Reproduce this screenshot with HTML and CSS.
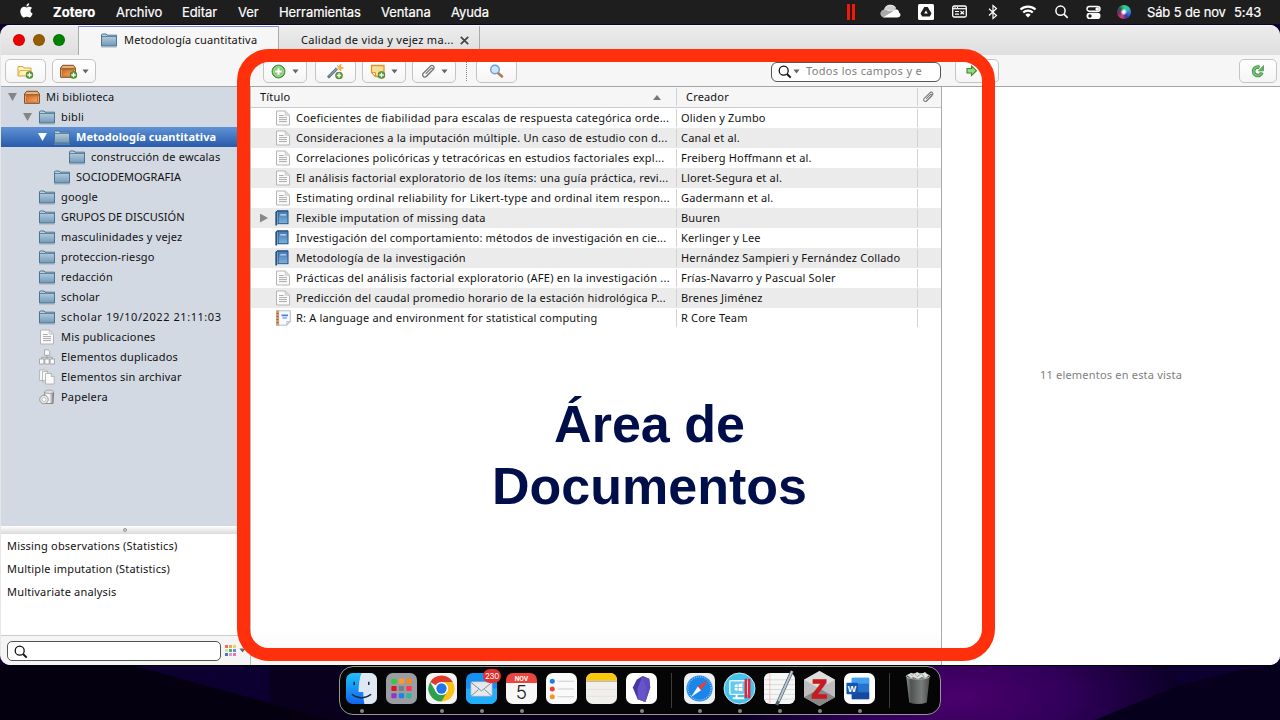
FILE: index.html
```html
<!DOCTYPE html>
<html lang="es">
<head>
<meta charset="utf-8">
<title>Zotero</title>
<link rel="stylesheet" href="styles.css">
</head>
<body>
<svg class="defs" width="0" height="0">
  <defs>
    <linearGradient id="gFolder" x1="0" y1="0" x2="0" y2="1"><stop offset="0" stop-color="#c3d6e4"/><stop offset="1" stop-color="#7199b8"/></linearGradient>
    <linearGradient id="gBox" x1="0" y1="0" x2="1" y2="1"><stop offset="0" stop-color="#cf6f25"/><stop offset="1" stop-color="#f5a566"/></linearGradient>
    <linearGradient id="gBook" x1="0" y1="0" x2="0" y2="1"><stop offset="0" stop-color="#4579b5"/><stop offset="1" stop-color="#7ab0dc"/></linearGradient>
    <linearGradient id="gCan" x1="0" y1="0" x2="1" y2="0"><stop offset="0" stop-color="#eee"/><stop offset=".5" stop-color="#fff"/><stop offset="1" stop-color="#777"/></linearGradient>
    <symbol id="folder" viewBox="0 0 16 16"><path d="M.5 14V2.700L1.200 2h4l.8 1.200h9.500V14z" fill="url(#gFolder)" stroke="#4b7492"/><path d="M1 4.500h14" stroke="#4b7492" stroke-width=".8"/><path d="M0 15.100h16" stroke="#9aa5b2" stroke-width=".7"/></symbol>
    <symbol id="box" viewBox="0 0 16 16"><path d="M.6 5 2.600 2.300h10.800L15.400 5v9.300H.6z" fill="#e9b27c" stroke="#824717"/><path d="M1.200 5.200h13.600v1.300H1.200z" fill="#8d4d1b"/><path d="M2.500 6.800h11v6.400h-11z" fill="url(#gBox)" stroke="#b4581b" stroke-width=".6"/></symbol>
    <symbol id="page" viewBox="0 0 16 16"><path d="M1.500 1h8.700l4.300 4.200V15h-13z" fill="#fbfbfb" stroke="#b5b5b5"/><path d="M10.200 1v4.200h4.300z" fill="#e2e2e2" stroke="#bbb" stroke-width=".7"/><path d="M4 5.500h4.700M4 7.600h8M4 9.600h8M4 11.600h8" stroke="#a2a2a2" stroke-width=".9"/></symbol>
    <symbol id="book" viewBox="0 0 16 16"><path d="M2 .8h11v13.400H2.800L.9 15.300V2z" fill="#2b5687" stroke="#244b78"/><path d="M3.700 1.500h8.800v11.800H3.700z" fill="url(#gBook)"/><path d="M2.600 1.800v12.400" stroke="#b2cae0" stroke-width=".7"/><path d="M5.200 4.200h6v1.200h-6z" fill="#c8e0f2"/><path d="M2.200 14.700h11" stroke="#dfe8ef" stroke-width="1"/></symbol>
    <symbol id="plus" viewBox="0 0 10 10"><circle cx="5" cy="5" r="4.400" fill="#5a9e3b" stroke="#3f7b28" stroke-width=".8"/><path d="M5 2.300v5.400M2.300 5h5.400" stroke="#fff" stroke-width="1.600"/></symbol>
    <symbol id="clip" viewBox="0 0 16 16"><path d="M6 13.200 13.700 5.500c1.100-1.200 1-2.600.1-3.400-.9-.8-2.300-.7-3.300.3L3 9.800c-1 1-1 2.600 0 3.500s2.500.8 3.500-.2l6.300-6.400c.7-.7.7-1.500.2-2s-1.300-.4-1.900.2L6 10" fill="none" stroke="#777" stroke-width="1.400" stroke-linecap="round"/></symbol>
    <symbol id="loupe" viewBox="0 0 14 14"><circle cx="5.700" cy="5.700" r="4.500" fill="none" stroke="#111" stroke-width="1.300"/><path d="m9 9 3.700 3.700" stroke="#111" stroke-width="1.900"/></symbol>
    <symbol id="down" viewBox="0 0 8 5"><path d="M.5.3h7L4 4.800z" fill="#666"/></symbol>
  </defs>
</svg>

<header class="menubar">
  <svg class="apple" viewBox="0 0 14 17"><path d="M9.900.2c.2 1.700-1.300 3.500-3 3.400C6.700 2 8.200.4 9.900.2zM7 4.600c.8 0 1.700-.8 3.100-.8 1.200 0 2.300.6 3 1.600-2.500 1.500-2.200 4.900.5 6-.7 1.900-2 4.100-3.400 4.100-1.100 0-1.600-.7-2.900-.7s-1.900.7-2.900.7C2.300 15.500.3 11.900.3 9c0-3.200 2-5.100 4.100-5.100 1.200 0 2 .7 2.600.7z" fill="#fff"/></svg>
  <nav class="menus"><b class="m-app">Zotero</b><span class="m-file">Archivo</span><span class="m-edit">Editar</span><span class="m-view">Ver</span><span class="m-tools">Herramientas</span><span class="m-win">Ventana</span><span>Ayuda</span></nav>
  <div class="status">
    <svg width="33" height="24"><path d="M1.500 4v16M6.500 4v16" stroke="#f31808" stroke-width="3"/></svg>
    <svg width="38" height="24"><path d="M4 10a6.500 6.500 0 0 1 12-2l-6 4z" fill="#f0f0f0"/><path d="M4 17.500C-1 17-1 9.500 5 9.500L11 12z" fill="#aaa"/><path d="M3 17.500 12 11.500c2-3.500 7-2.500 7 1 3 2 1 5-1.500 5z" fill="#fff"/><path d="M5 9.500c3-.5 5 1 7 2.500l4-3.500C13 5 7 4 4.500 9z" fill="#d0d0d0"/></svg>
    <svg width="34" height="24"><rect x="0" y="4" width="16" height="16" rx="1.500" fill="#fff"/><path d="M6.300 7h3.400L13.500 13.500 11.800 16.500H4.200L2.500 13.500z" fill="#1e1e1e"/><path d="M8 10.500 9.800 13.500H6.200z" fill="#fff"/></svg>
    <svg width="37" height="24"><rect x=".7" y="6" width="13.600" height="11" rx="1.500" fill="none" stroke="#fff" stroke-width="1.300"/><path d="M1 8.700h13" stroke="#fff" stroke-width="1.200"/><path d="M3 11.500h4M3 14.200h4M8.500 11.300l3.500 3M8.500 14.300l3.500-3M2.500 7.400h1M5 7.400h1" stroke="#fff" stroke-width="1.200"/></svg>
    <svg width="31" height="24"><path d="m0 8.800 7.500 6.800L4 18.500V5.500l3.500 3-7.500 7" fill="none" stroke="#fff" stroke-width="1.200"/></svg>
    <svg width="36" height="24"><g fill="none" stroke="#fff" stroke-width="2.200"><path d="M.5 9.500a11 11 0 0 1 15 0M3.200 12.500a7 7 0 0 1 9.600 0"/></g><path d="M5.300 14.700a4 4 0 0 1 5.400 0L8 17.500z" fill="#fff"/></svg>
    <svg width="31" height="24"><circle cx="4.500" cy="10.700" r="4.600" fill="none" stroke="#fff" stroke-width="1.500"/><path d="m8 14.200 3.700 3.700" stroke="#fff" stroke-width="1.700"/></svg>
    <svg width="31" height="24"><rect x="0" y="6.500" width="13" height="4.800" rx="2.400" fill="none" stroke="#fff" stroke-width="1.400"/><rect x="-.5" y="12.800" width="14" height="6.200" rx="3.100" fill="#fff"/><circle cx="10.200" cy="9" r="1.800" fill="#fff"/><circle cx="3" cy="16" r="1.700" fill="#1e1e1e"/></svg>
    <span class="siri"></span>
    <span class="date">Sáb 5 de nov</span><span class="time">5:43</span>
  </div>
</header>

<main class="window">
  <div class="tabs">
    <div class="lights"><i class="red"></i><i class="amber"></i><i class="green"></i></div>
    <div class="tab active"><svg class="i16"><use href="#folder"/></svg><span>Metodología cuantitativa</span></div>
    <div class="tab second"><span>Calidad de vida y vejez ma...</span><svg width="9" height="9" viewBox="0 0 9 9"><path d="m.8.800 7.400 7.400M8.200.8.800 8.200" stroke="#444" stroke-width="1.700"/></svg></div>
  </div>

  <div class="toolbar">
    <div class="btn b1"><svg width="17" height="16" viewBox="0 0 17 16"><path d="M1 13V3.500h5l1 1.500h7v8z" fill="#fff1b8" stroke="#d4a240"/><path d="M1 13 3 7.500h11" fill="none" stroke="#e0b65a"/><use href="#plus" x="8.500" y="8" width="8" height="8"/></svg></div>
    <div class="btn b2"><svg width="18" height="16" viewBox="0 0 18 16"><use href="#box" x="0" y="0" width="16" height="16"/><use href="#plus" x="9.500" y="8" width="8" height="8"/></svg><svg class="dn"><use href="#down"/></svg></div>
    <div class="btn b3"><svg width="15" height="15" viewBox="0 0 16 16"><circle cx="8" cy="8" r="6.900" fill="#5cb14e" stroke="#3c8c35"/><circle cx="8" cy="8" r="5.300" fill="#82ca72" stroke="#c7e8bd" stroke-width=".8"/><path d="M8 4.500v7M4.500 8h7" stroke="#fff" stroke-width="2.300"/></svg><svg class="dn"><use href="#down"/></svg></div>
    <div class="btn b4"><svg width="17" height="17" viewBox="0 0 17 17"><path d="m1 14.500 9-9" stroke="#506a80" stroke-width="2.800"/><path d="m2 13.500 9-9" stroke="#a9c7dc" stroke-width="1"/><path d="m10 2 1.500 2L14 1l-.5 3 3 1-3 1 .500 2-2.500-2" fill="#ffba2c" stroke="#f09020" stroke-width=".6"/><use href="#plus" x="8" y="8.500" width="8" height="8"/></svg></div>
    <div class="btn b5"><svg width="16" height="16" viewBox="0 0 16 16"><path d="M1.500 2.500h12.500v11h-8.500l-4-4z" fill="#f9df94" stroke="#e0952c" stroke-width="1.300"/><path d="M1.500 9.500h4v4z" fill="#fff4ca" stroke="#d99b30"/><use href="#plus" x="7.500" y="8" width="8" height="8"/></svg><svg class="dn"><use href="#down"/></svg></div>
    <div class="btn b6"><svg width="16" height="15"><use href="#clip"/></svg><svg class="dn"><use href="#down"/></svg></div>
    <div class="dots"></div>
    <div class="btn b7"><svg width="15" height="15" viewBox="0 0 15 15"><path d="m8.500 8.500 4.500 4" stroke="#b47a4b" stroke-width="2.600" stroke-linecap="round"/><circle cx="6" cy="5.500" r="4.300" fill="#cde5fa" stroke="#6c9dd2" stroke-width="1.400"/></svg></div>
    <div class="search"><svg width="14" height="14"><use href="#loupe"/></svg><svg class="dn"><use href="#down"/></svg><span>Todos los campos y e</span></div>
    <div class="btn b8"><svg width="12" height="12" viewBox="0 0 12 12"><path d="M1 3.500h4.500V1l5 4.700-5 4.800V8H1z" fill="#9bd77f" stroke="#3c8a2c" stroke-width="1.100"/></svg></div>
    <div class="btn b9"><svg width="14" height="14" viewBox="0 0 14 14"><path d="M10.800 8.500A4.200 4.200 0 1 1 8.500 3.500" fill="none" stroke="#3f9145" stroke-width="3.600"/><path d="M10.800 8.500A4.200 4.200 0 1 1 8.500 3.500" fill="none" stroke="#77c178" stroke-width="1.800"/><path d="m7.500 7 5-.2V1.500z" fill="#61b263" stroke="#3f9145" stroke-width=".7"/></svg></div>
  </div>

  <div class="panes">
    <aside class="side">
      <div class="tree">
        <div class="node l0"><i class="tw"></i><svg class="i16"><use href="#box"/></svg><span>Mi biblioteca</span></div>
        <div class="node l1"><i class="tw"></i><svg class="i16"><use href="#folder"/></svg><span>bibli</span></div>
        <div class="node l2 selected"><i class="tw"></i><svg class="i16"><use href="#folder"/></svg><span>Metodología cuantitativa</span></div>
        <div class="node l3"><i class="tw none"></i><svg class="i16"><use href="#folder"/></svg><span>construcción de ewcalas</span></div>
        <div class="node l2"><i class="tw none"></i><svg class="i16"><use href="#folder"/></svg><span class="caps">SOCIODEMOGRAFIA</span></div>
        <div class="node l1"><i class="tw none"></i><svg class="i16"><use href="#folder"/></svg><span>google</span></div>
        <div class="node l1"><i class="tw none"></i><svg class="i16"><use href="#folder"/></svg><span class="caps">GRUPOS DE DISCUSIÓN</span></div>
        <div class="node l1"><i class="tw none"></i><svg class="i16"><use href="#folder"/></svg><span>masculinidades y vejez</span></div>
        <div class="node l1"><i class="tw none"></i><svg class="i16"><use href="#folder"/></svg><span>proteccion-riesgo</span></div>
        <div class="node l1"><i class="tw none"></i><svg class="i16"><use href="#folder"/></svg><span>redacción</span></div>
        <div class="node l1"><i class="tw none"></i><svg class="i16"><use href="#folder"/></svg><span>scholar</span></div>
        <div class="node l1"><i class="tw none"></i><svg class="i16"><use href="#folder"/></svg><span class="num">scholar 19/10/2022 21:11:03</span></div>
        <div class="node l1"><i class="tw none"></i><svg class="i16"><use href="#page"/></svg><span>Mis publicaciones</span></div>
        <div class="node l1"><i class="tw none"></i><svg class="i16" viewBox="0 0 16 16"><g fill="#fafafa" stroke="#999" stroke-width=".8"><path d="M5.500.8h3.500l1.700 1.500v4H5.500zM.5 10h4.400v5H.5zM5.800 10h4.400v5H5.800zM11.100 10h4.400v5h-4.400z"/><path d="M8 6.300V10M2.700 10V8.200h10.600V10" fill="none"/></g></svg><span>Elementos duplicados</span></div>
        <div class="node l1"><i class="tw none"></i><svg class="i16" viewBox="0 0 16 16"><g fill="#fafafa" stroke="#aaa" stroke-width=".8"><path d="M.6 1h6l2 2v8.500h-8zM3.500 2.500h5.500l2 2V13H3.500z"/><path d="M6.500 4.500h5.700l3 3V15H6.500z"/><path d="M12.200 4.500v3h3" fill="#ddd"/></g></svg><span>Elementos sin archivar</span></div>
        <div class="node l1"><i class="tw none"></i><svg class="i16" viewBox="0 0 16 16"><path d="M5.500 3 6.500 14.500h7.500L14.700 3z" fill="url(#gCan)" stroke="#777" stroke-width=".8"/><ellipse cx="10.200" cy="2.800" rx="4.600" ry="1.800" fill="#ddd" stroke="#999" stroke-width=".8"/><circle cx="5" cy="10.500" r="4.300" fill="#e5e5e5" stroke="#888" stroke-width=".8"/><circle cx="5" cy="10.500" r="2" fill="#fff" stroke="#aaa" stroke-width=".6"/></svg><span>Papelera</span></div>
      </div>
      <div class="splitter"><i></i></div>
      <div class="tags"><span>Missing observations (Statistics)</span><span>Multiple imputation (Statistics)</span><span>Multivariate analysis</span></div>
      <div class="tagbar">
        <div class="tagsearch"><svg width="14" height="14"><use href="#loupe"/></svg></div>
        <div class="swatches"><i class="s1"></i><i class="s2"></i><i class="s3"></i><i class="s4"></i><i class="s5"></i><i class="s6"></i><i class="s7"></i><i class="s8"></i><i class="s9"></i></div>
        <svg class="dn"><use href="#down"/></svg>
      </div>
    </aside>

    <section class="items">
      <div class="thead"><div class="ct">Título<i class="sort"></i></div><div class="cc">Creador</div><div class="ca"><svg width="12" height="12"><use href="#clip"/></svg></div></div>
      <div class="row"><div class="ct"><i class="ex none"></i><svg class="i16"><use href="#page"/></svg><span>Coeficientes de fiabilidad para escalas de respuesta categórica orde...</span></div><div class="cc">Oliden y Zumbo</div><div class="ca"></div></div>
      <div class="row"><div class="ct"><i class="ex none"></i><svg class="i16"><use href="#page"/></svg><span>Consideraciones a la imputación múltiple. Un caso de estudio con d...</span></div><div class="cc">Canal et al.</div><div class="ca"></div></div>
      <div class="row"><div class="ct"><i class="ex none"></i><svg class="i16"><use href="#page"/></svg><span>Correlaciones policóricas y tetracóricas en estudios factoriales expl...</span></div><div class="cc">Freiberg Hoffmann et al.</div><div class="ca"></div></div>
      <div class="row"><div class="ct"><i class="ex none"></i><svg class="i16"><use href="#page"/></svg><span class="wide">El análisis factorial exploratorio de los ítems: una guía práctica, revi...</span></div><div class="cc">Lloret-Segura et al.</div><div class="ca"></div></div>
      <div class="row"><div class="ct"><i class="ex none"></i><svg class="i16"><use href="#page"/></svg><span class="wide">Estimating ordinal reliability for Likert-type and ordinal item respon...</span></div><div class="cc">Gadermann et al.</div><div class="ca"></div></div>
      <div class="row"><div class="ct"><i class="ex"></i><svg class="i16"><use href="#book"/></svg><span class="wide">Flexible imputation of missing data</span></div><div class="cc">Buuren</div><div class="ca"></div></div>
      <div class="row"><div class="ct"><i class="ex none"></i><svg class="i16"><use href="#book"/></svg><span class="tight">Investigación del comportamiento: métodos de investigación en cie...</span></div><div class="cc">Kerlinger y Lee</div><div class="ca"></div></div>
      <div class="row"><div class="ct"><i class="ex none"></i><svg class="i16"><use href="#book"/></svg><span class="tight">Metodología de la investigación</span></div><div class="cc">Hernández Sampieri y Fernández Collado</div><div class="ca"></div></div>
      <div class="row"><div class="ct"><i class="ex none"></i><svg class="i16"><use href="#page"/></svg><span class="wide">Prácticas del análisis factorial exploratorio (AFE) en la investigación ...</span></div><div class="cc">Frías-Navarro y Pascual Soler</div><div class="ca"></div></div>
      <div class="row"><div class="ct"><i class="ex none"></i><svg class="i16"><use href="#page"/></svg><span>Predicción del caudal promedio horario de la estación hidrológica P...</span></div><div class="cc">Brenes Jiménez</div><div class="ca"></div></div>
      <div class="row"><div class="ct"><i class="ex none"></i><svg class="i16" viewBox="0 0 16 16"><path d="M3.500.8h11.800v10.700l-3.500 3.700H3.500z" fill="#f7fafe" stroke="#a9b4c4" stroke-width=".9"/><path d="M11.800 15.200v-3.700h3.500z" fill="#d5dde8" stroke="#aab" stroke-width=".6"/><path d="M2.500.5v15" stroke="#b5622d" stroke-width="2.600"/><path d="M1 2h4M1 5h4M1 8h4M1 11h4M1 14h4" stroke="#f1d2b7" stroke-width=".9"/><path d="M6.500 4.500H13v1.800H6.500zM7.500 7.500H12v1H7.500z" fill="#467fe0"/></svg><span class="tight">R: A language and environment for statistical computing</span></div><div class="cc">R Core Team</div><div class="ca"></div></div>
      <h1 class="label">Área de<br>Documentos</h1>
    </section>

    <section class="detail"><span>11 elementos en esta vista</span></section>
  </div>
</main>

<div class="frame"></div>

<footer class="desktop">
  <svg class="wall" viewBox="0 0 1280 55" preserveAspectRatio="none"><defs><radialGradient id="w1"><stop offset="0" stop-color="#4b006c"/><stop offset=".5" stop-color="#300059"/><stop offset="1" stop-color="#0b0028"/></radialGradient></defs><rect width="1280" height="55" fill="#09001d"/><path d="M130 0 270 38V0z" fill="#0b0030"/><path d="M0 0h130L330 55H0z" fill="#04000f"/><path d="M740 0h540v55H745z" fill="#0c0030"/><ellipse cx="960" cy="32" rx="220" ry="90" fill="url(#w1)"/><path d="M1095 55 1180 20 1240 5 1280 0v55z" fill="#07001c"/><path d="M0 .5h1280" stroke="#000"/></svg>
  <div class="dock">
    <div class="app run"><svg viewBox="0 0 32 32"><defs><linearGradient id="fb" x1="0" y1="0" x2="0" y2="1"><stop offset="0" stop-color="#1ec2fa"/><stop offset="1" stop-color="#1265ee"/></linearGradient></defs><rect width="32" height="32" rx="7" fill="url(#fb)"/><path d="M16 0h9a7 7 0 0 1 7 7v18a7 7 0 0 1-7 7h-6q-1.500-6-1.200-12.500H13Q13 8 16 0z" fill="#dfe7f2"/><path d="M8.500 9v3.500M23.500 9v3.500" stroke="#15263a" stroke-width="1.500"/><path d="M6 22q10 7.500 20 0" fill="none" stroke="#15263a" stroke-width="1.300"/></svg></div>
    <div class="app"><svg viewBox="0 0 32 32"><rect width="32" height="32" rx="7" fill="#9c9da3"/><g><rect x="5.500" y="6" width="5.500" height="5" rx="1" fill="#30cc3c"/><rect x="13.200" y="6" width="5.500" height="5" rx="1" fill="#ff9b22"/><rect x="21" y="6" width="5.500" height="5" rx="1" fill="#ff8718"/><rect x="5.500" y="13.500" width="5.500" height="5" rx="1" fill="#d51823"/><rect x="13.200" y="13.500" width="5.500" height="5" rx="1" fill="#777e87"/><rect x="21" y="13.500" width="5.500" height="5" rx="1" fill="#ff3556"/><rect x="5.500" y="21" width="5.500" height="5" rx="1" fill="#9336c7"/><rect x="13.200" y="21" width="5.500" height="5" rx="1" fill="#1683ef"/><rect x="21" y="21" width="5.500" height="5" rx="1" fill="#24bd98"/></g></svg></div>
    <div class="app run"><svg viewBox="0 0 32 32"><rect width="32" height="32" rx="7" fill="#f4f4f4"/><path d="M16 16 4.300 9.200A13.500 13.500 0 0 1 27.700 9.300z" fill="#df3a2c"/><path d="M16 16H16V9.300h11.700A13.500 13.500 0 0 1 16 29.500z" fill="#fbc116"/><path d="M4.300 9.200A13.500 13.500 0 0 0 16 29.500L21.800 19.400 10.200 19.400z" fill="#2da14c"/><circle cx="16" cy="16" r="6.800" fill="#fff"/><circle cx="16" cy="16" r="5.300" fill="#2476e8"/></svg></div>
    <div class="app run"><svg viewBox="0 0 32 32"><rect width="32" height="32" rx="7" fill="#168ff2"/><path d="M0 16h32v9a7 7 0 0 1-7 7H7a7 7 0 0 1-7-7z" fill="#22adfb"/><rect x="5" y="9" width="22" height="15" rx="1" fill="#e5e9ee" stroke="#9ba5b0" stroke-width=".6"/><path d="m5 9.500 11 9 11-9M5 24l8-7M27 24l-8-7" fill="none" stroke="#7e8b98"/></svg><b class="badge">230</b></div>
    <div class="app run cal"><b>NOV</b><span>5</span></div>
    <div class="app"><svg viewBox="0 0 32 32"><rect width="32" height="32" rx="7" fill="#fafafa"/><path d="M12 8.500h17M12 16.500h17M12 24.500h17" stroke="#ccc"/><circle cx="6.500" cy="8.500" r="2.600" fill="#1c7ef2"/><circle cx="6.500" cy="16.500" r="2.600" fill="#f33d38"/><circle cx="6.500" cy="24.500" r="2.600" fill="#f89222"/></svg></div>
    <div class="app"><svg viewBox="0 0 32 32"><rect width="32" height="32" rx="7" fill="#f1efeb"/><path d="M0 8V7a7 7 0 0 1 7-7h18a7 7 0 0 1 7 7v1z" fill="#fbc70d"/><path d="M0 8.600h32" stroke="#aaa"/><path d="M0 17h32M0 24h32" stroke="#e2e1de"/></svg></div>
    <div class="app run"><svg viewBox="0 0 32 32"><rect width="32" height="32" rx="7" fill="#fff"/><path d="m17 3 7 3 1 9-5 15-8-3-5-12 4-8z" fill="#4b35a5"/><path d="m17 3-5 13 0 11 8 3 2-14z" fill="#6654c8"/><path d="m17 3 7 3 1 9-5 15 1-15z" fill="#5d4bc0"/></svg></div>
    <i class="sep"></i>
    <div class="app run"><svg viewBox="0 0 32 32"><rect width="32" height="32" rx="7" fill="#efefef"/><circle cx="16" cy="16" r="13.500" fill="#1c86e8"/><circle cx="16" cy="16" r="12" fill="none" stroke="#b6ddff" stroke-width="1.300" stroke-dasharray=".7 1.400"/><path d="m25 7-7.400 10.700L14.300 14z" fill="#f13a31"/><path d="m7 25 7.300-11 3.300 3.700z" fill="#f4f4f4"/></svg></div>
    <div class="app run"><svg viewBox="0 0 32 32"><circle cx="16" cy="16" r="16" fill="#44c2ee" stroke="#d7e8ef" stroke-width="1"/><rect x="6" y="8" width="18" height="14" rx="1" fill="#64c9ed" stroke="#eaf8fd" stroke-width="1.400"/><path d="M13 22v3M9 26h12" stroke="#fff" stroke-width="2"/><path d="m11 12 3-.5v3h-3zm4-.700 4-.6v3.800h-4zM11 15.300h3v3l-3-.6zm4 0h4v3.500l-4-.500z" fill="#fff"/><path d="M22.500 6v20M26 6v20" stroke="#e3263b" stroke-width="2.600"/></svg></div>
    <div class="app run"><svg viewBox="0 0 32 32"><rect width="32" height="32" rx="6" fill="#f6f6f4"/><path d="M0 7h32M0 12h32M0 17h32M0 22h32M0 27h32" stroke="#ccd2d8" stroke-width=".8"/><path d="M6 0v32" stroke="#f1a7a5" stroke-width=".7"/><path d="m29-2-14 31-2 4" stroke="#53616c" stroke-width="3.500"/><path d="m29-2-14 31" stroke="#b7c9d8" stroke-width="2"/></svg></div>
    <div class="app run zot"><svg viewBox="0 0 32 32"><path d="m16-2 16 9v18l-16 9-16-9V7z" fill="#bdbdbd"/><path d="m16-2 16 9-16 9L0 7z" fill="#dedede"/><path d="m16 16 16 9-16 9-16-9z" fill="#888"/></svg><b>Z</b></div>
    <div class="app run word"><svg viewBox="0 0 32 32"><rect width="32" height="32" rx="7" fill="#fff"/><rect x="8" y="5" width="18" height="22" rx="1" fill="#2474ce"/><path d="M8 5h18v6H8z" fill="#44a0ec"/><path d="M8 20h18v7H8z" fill="#17489c"/><rect x="2.500" y="10" width="12" height="12" rx="1" fill="#1653b2"/></svg><b>W</b></div>
    <i class="sep"></i>
    <div class="app trash"><svg viewBox="0 0 32 36"><defs><linearGradient id="tr" x1="0" x2="1"><stop offset="0" stop-color="#8c908e"/><stop offset=".2" stop-color="#4f5351"/><stop offset=".65" stop-color="#787c7a"/><stop offset="1" stop-color="#4b4e4c"/></linearGradient></defs><path d="m2.500 3 3.500 31q10 3.500 20 0L29.500 3z" fill="url(#tr)"/><ellipse cx="16" cy="4" rx="13.500" ry="3.300" fill="#555" stroke="#b9bcbb"/><path d="m4 3 4-3 3 2 4-3 4 3 5-3 4 4-3 3-5-1-4 2-5-2-3 1z" fill="#e2e2df"/><path d="m8 2 2 2m8-2-3 3" stroke="#368bd0"/><path d="m13 1 1 3" stroke="#ed9630"/><path d="m21 2 2 3" stroke="#4aa05b"/></svg></div>
  </div>
</footer>
</body>
</html>
```

FILE: styles.css
```css
* { box-sizing: border-box; }
html, body { margin: 0; width: 1280px; height: 720px; overflow: hidden; }
body { background: #10002e; font: 11px/20px "Noto Sans", sans-serif; letter-spacing: .18px; color: #111; display: flex; flex-direction: column; position: relative; }
svg { display: block; flex: none; overflow: visible; }
.defs { position: absolute; }
i { display: block; flex: none; }
.i16 { width: 16px; height: 16px; }
.dn { width: 7px; height: 5px; }

.menubar { height: 24px; flex: none; background: #1e1e1e; color: #fff; font: 13px/24px Inter, sans-serif; letter-spacing: -.08px; display: flex; padding-left: 20px; margin-bottom: 1px; white-space: nowrap; }
.apple { width: 13px; height: 16px; margin-top: 3px; }
.menus { display: flex; margin-left: 20px; width: 794px; -webkit-text-stroke: .2px #fff; }
.m-app { width: 63px; letter-spacing: .05px; }
.m-file { width: 66px; } .m-edit { width: 56px; } .m-view { width: 41px; } .m-tools { width: 102px; } .m-win { width: 70px; }
.status { display: flex; }
.siri { width: 14px; height: 14px; margin: 5px 16px 0 -1px; border-radius: 50%; background: radial-gradient(circle at 48% 50%, #fff 0 10%, transparent 35%), conic-gradient(#3c8, #2bc5b5, #3c6de0, #323a9a, #e33a72, #742c65, #2b5a50, #3c8); }
.date { width: 87px; letter-spacing: -.15px; -webkit-text-stroke: .2px #fff; }
.time { letter-spacing: -.25px; -webkit-text-stroke: .2px #fff; }

.window { height: 640px; flex: none; border-radius: 10px; overflow: hidden; background: #fff; display: flex; flex-direction: column; border-left: 1px solid #e7e7e7; }
.tabs { height: 30px; flex: none; display: flex; background: linear-gradient(#ececec, #dfdfdf); border-top: 1px solid #f8f8f8; }
.tabs::after { content: ""; width: 780px; border-bottom: 1px solid #aaa; height: 29px; }
.lights { width: 77px; display: flex; gap: 8px; padding: 8px 0 0 12px; border-bottom: 1px solid #ddd; }
.lights i { width: 12px; height: 12px; border-radius: 50%; border: 1px solid rgba(0,0,0,.12); }
.red { background: #ed0000; } .amber { background: #955f00; } .green { background: #018100; }
.tab { display: flex; align-items: center; border-right: 1px solid #aaa; white-space: nowrap; }
.tab.active { width: 201px; background: #f6f6f6; border-left: 1px solid #aaa; border-top: 1px solid #6c8bd0; padding: 0 0 2px 22px; gap: 7px; }
.tab.second { width: 201px; padding: 0 10px 0 22px; justify-content: space-between; border-bottom: 1px solid #aaa; letter-spacing: .3px; }

.toolbar { height: 32px; flex: none; background: #f6f6f6; border-bottom: 1px solid #a5a5a5; display: flex; padding: 4px 0 0 4px; }
.btn { height: 24px; border: 1px solid #c4c4c4; border-radius: 5px; background: linear-gradient(#fff, #f5f5f5); display: flex; align-items: center; justify-content: center; gap: 5px; flex: none; }
.b1 { width: 41px; } .b2 { width: 44px; margin-left: 6px; gap: 4px; } .b3 { width: 44px; margin-left: 167px; gap: 6px; }
.b4 { width: 41px; margin-left: 8px; } .b5 { width: 44px; margin-left: 6px; } .b6 { width: 44px; margin-left: 6px; }
.dots { margin: 2px 9px 0 10px; height: 20px; border-left: 1px dotted #888; }
.b7 { width: 41px; }
.search { width: 170px; height: 20px; margin: 3px 0 0 254px; border: 1px solid #555; border-radius: 6px; background: #fff; display: flex; align-items: center; padding-left: 6px; color: #808080; white-space: nowrap; letter-spacing: .35px; }
.search .dn { margin: -2px 6px 0 1px; }
.search span { margin-top: -2px; }
.b8 { width: 44px; margin-left: 14px; justify-content: flex-start; padding-left: 10px; }
.b9 { width: 38px; margin-left: 240px; }

.panes { flex: 1; display: flex; min-height: 0; }
.side { width: 249px; flex: none; display: flex; flex-direction: column; }
.tree { height: 439px; background: #d3d9e3; flex: none; }
.node { height: 20px; display: flex; align-items: center; white-space: nowrap; }
.l0 { padding-left: 7px; } .l1 { padding-left: 22px; } .l2 { padding-left: 37px; } .l3 { padding-left: 52px; }
.tw { width: 9px; height: 8px; background: #858585; clip-path: polygon(0 0, 100% 0, 50% 100%); margin-right: 7px; }
.none { visibility: hidden; }
.node span { margin-left: 6px; }
.node .caps { letter-spacing: 0; }
.node .num { letter-spacing: .56px; }
.selected { background: linear-gradient(#5f92d5, #275bab); color: #fff; font-weight: bold; letter-spacing: .04px; }
.selected .tw { background: #fff; }
.splitter { height: 8px; flex: none; background: linear-gradient(#fff, #dedede); border-bottom: 1px solid #ddd; }
.splitter i { width: 4px; height: 4px; border: 1px solid #999; border-radius: 50%; margin: 2px auto 0 122px; background: #ccc; }
.tags { flex: 1; display: flex; flex-direction: column; padding-left: 6px; background: #fff; line-height: 23px; white-space: nowrap; }
.tagbar { height: 30px; background: #f5f5f5; border-top: 1px solid #ccc; display: flex; align-items: center; padding-left: 6px; }
.tagsearch { width: 214px; height: 20px; border: 1px solid #555; border-radius: 5px; background: #fff; padding: 3px 0 0 6px; }
.swatches { display: grid; grid-template-columns: repeat(3, 3px); gap: 1px; margin: 0 3px 0 4px; }
.swatches i { width: 3px; height: 3px; }
.s1{background:#f76667}.s2{background:#f7a15c}.s3{background:#efd25a}.s4{background:#c5e5a5}.s5{background:#45ba5a}.s6{background:#5694e0}.s7{background:#5572b5}.s8{background:#d49bdc}.s9{background:#ed70b4}

.items { width: 692px; flex: none; border-left: 1px solid #bbb; border-right: 1px solid #aaa; background: linear-gradient(#fff 94%, #f5f5f5); }
.thead { height: 21px; display: flex; background: #f6f6f6; border-bottom: 1px solid #ccc; }
.row { height: 20px; display: flex; white-space: nowrap; }
.row:nth-child(odd) { background: #ebebeb; }
.ct { width: 425px; flex: none; display: flex; align-items: center; }
.thead .ct { padding-left: 9px; justify-content: space-between; }
.sort { border: 4px solid transparent; border-bottom: 5px solid #777; border-top: 0; margin-right: 15px; }
.cc { width: 241px; border-left: 1px solid #d2d2d2; padding-left: 4px; margin: 1px 0; line-height: 18px; }
.thead .cc { padding-left: 9px; }
.ca { flex: 1; border-left: 1px solid #d2d2d2; margin: 1px 0; padding: 3px 0 0 4px; }
.ex { width: 8px; height: 9px; background: #888; clip-path: polygon(0 0, 100% 50%, 0 100%); margin: 0 7px 0 9px; }
.row .ct span { margin-left: 5px; letter-spacing: .215px; }
.row .ct .wide { letter-spacing: .245px; }
.row .ct .tight { letter-spacing: .185px; }
.label { margin: 65px 0 0 0; padding-left: 107px; text-align: center; color: #000f49; font: bold 52px/62px "Liberation Sans", sans-serif; letter-spacing: 0; }
.detail { flex: 1; background: #fff; text-align: center; padding: 278px 0 0; color: #808080; letter-spacing: .2px; }
.frame { position: absolute; left: 237px; top: 49px; width: 758px; height: 612px; border: 13px solid #ff300b; border-radius: 32px; }

.desktop { height: 55px; position: relative; display: flex; justify-content: center; letter-spacing: 0; }
.wall { position: absolute; left: 0; top: 0; width: 1280px; height: 55px; overflow: hidden; }
.dock { position: relative; width: 602px; height: 49px; margin-top: 1px; border: 1px solid #979797; border-radius: 14px; background: #050505; display: flex; padding: 6px 0 0 6px; gap: 9px; }
.app { width: 31px; height: 31px; flex: none; position: relative; }
.app svg { width: 31px; height: 31px; }
.run::after { content: ""; position: absolute; left: 14px; top: 36px; width: 4px; height: 4px; border-radius: 50%; background: #858585; }
.sep { width: 1px; height: 35px; background: #3c3c3c; margin: 0 3px 0 5px; }
.badge { position: absolute; left: 17px; top: -4px; width: 18px; height: 14px; border-radius: 7px; background: #e12e2e; color: #fff; font: 8px/14px Inter, sans-serif; letter-spacing: -.3px; text-align: center; }
.cal { border-radius: 7px; background: linear-gradient(#ec453e 10px, #f7f7f7 10px); text-align: center; display: flex; flex-direction: column; }
.cal b { color: #fff; font: bold 6px/11px Inter, sans-serif; }
.cal span { font: 300 19px/18px Inter, sans-serif; color: #222; }
.zot b { position: absolute; inset: 0; text-align: center; color: #c51b22; font: bold 25px/32px "Liberation Sans", sans-serif; -webkit-text-stroke: 1.500px #c51b22; }
.word b { position: absolute; left: 2px; top: 10px; width: 12px; color: #fff; font: bold 9px/12px "Liberation Sans", sans-serif; text-align: center; }
.trash { width: 28px; margin-left: 2px; }
.trash svg { width: 28px; height: 35px; margin-top: -2px; }
```
